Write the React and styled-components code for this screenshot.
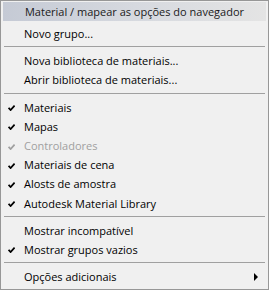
import React from "react";
import styled, { createGlobalStyle } from "styled-components";

const GlobalStyle = createGlobalStyle`
	html, body {
		margin: 0;
		padding: 0;
		background: #f0f0f0;
	}
	* {
		box-sizing: border-box;
	}
`;

const Menu = styled.div`
	width: 269px;
	height: 290px;
	border: 1px solid #979797;
	background: #f0f0f0;
	padding: 1px 2px;
	font-family: "Open Sans", "Noto Sans", sans-serif;
	font-size: 11px;
	color: #000;
	display: flex;
	flex-direction: column;
`;

const Header = styled.div`
	height: 19px;
	display: flex;
	align-items: center;
	justify-content: center;
	background: linear-gradient(to right, #c5cad5 0%, #d6d9df 50%, #e4e4e4 100%);
	color: #1a1a1a;
	margin-bottom: 3px;
`;

const Item = styled.div`
	height: 19.2px;
	display: flex;
	align-items: center;
	padding-left: 21px;
	position: relative;
	color: ${({ disabled }) => (disabled ? "#a0a0a0" : "#000")};
`;

const Check = styled.svg`
	position: absolute;
	left: 5px;
	top: 50%;
	margin-top: -2px;
`;

const Arrow = styled.span`
	position: absolute;
	right: 8px;
	top: 50%;
	margin-top: -4px;
	width: 0;
	height: 0;
	border-top: 4px solid transparent;
	border-bottom: 4px solid transparent;
	border-left: 4px solid #000;
`;

const Separator = styled.div`
	height: 8px;
	padding: 3px 1px 0;

	&::before {
		content: "";
		display: block;
		height: 1px;
		background: #a0a0a0;
	}
`;

const CheckMark = ({ color }) => (
	<Check width="7" height="6" viewBox="0 0 7 6">
		<path d="M0.6 2.8 L2.6 5 L6.6 0.6" fill="none" stroke={color} strokeWidth="1.8" />
	</Check>
);

const entries = [
	{ label: "Novo grupo..." },
	"sep",
	{ label: "Nova biblioteca de materiais..." },
	{ label: "Abrir biblioteca de materiais..." },
	"sep",
	{ label: "Materiais", checked: true },
	{ label: "Mapas", checked: true },
	{ label: "Controladores", checked: true, disabled: true },
	{ label: "Materiais de cena", checked: true },
	{ label: "Alosts de amostra", checked: true },
	{ label: "Autodesk Material Library", checked: true },
	"sep",
	{ label: "Mostrar incompatível" },
	{ label: "Mostrar grupos vazios", checked: true },
	"sep",
	{ label: "Opções adicionais", submenu: true },
];

const App = () => (
	<>
		<GlobalStyle />
		<Menu>
			<Header>Material / mapear as opções do navegador</Header>
			{entries.map((entry, index) =>
				entry === "sep" ? (
					<Separator key={index} />
				) : (
					<Item key={index} disabled={entry.disabled}>
						{entry.checked && <CheckMark color={entry.disabled ? "#a0a0a0" : "#000"} />}
						{entry.label}
						{entry.submenu && <Arrow />}
					</Item>
				)
			)}
		</Menu>
	</>
);

export default App;
